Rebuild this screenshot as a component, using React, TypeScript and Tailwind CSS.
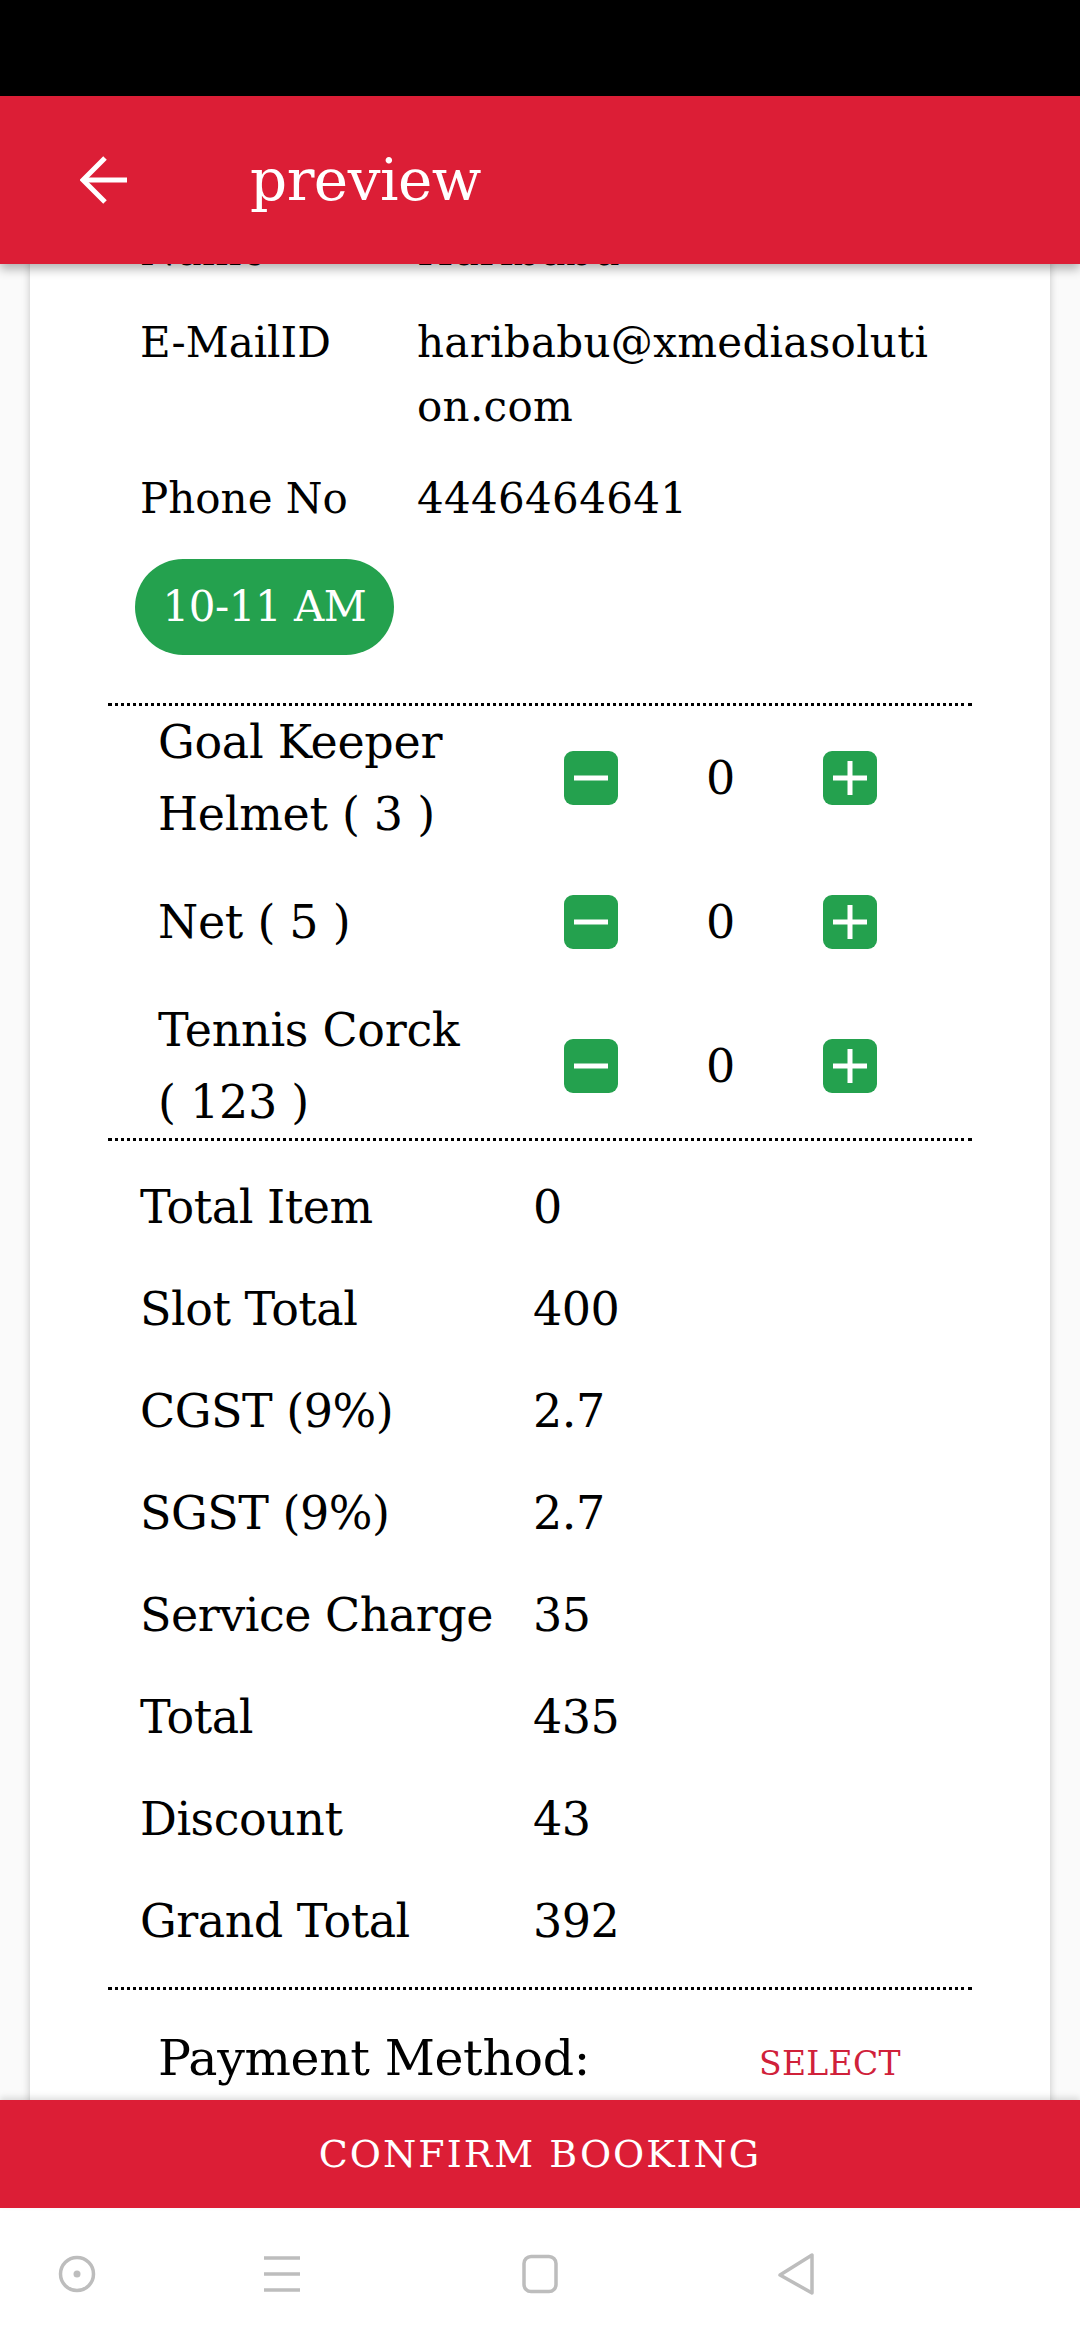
const details = [
  { label: "Name", value: ["Haribabu"] },
  { label: "E-MailID", value: ["haribabu@xmediasoluti", "on.com"] },
  { label: "Phone No", value: ["4446464641"] },
];

const items = [
  { name: "Goal Keeper Helmet (\u00a03\u00a0)", qty: 0 },
  { name: "Net (\u00a05\u00a0)", qty: 0 },
  { name: "Tennis Corck (\u00a0123\u00a0)", qty: 0 },
];

const summary = [
  ["Total Item", "0"],
  ["Slot Total", "400"],
  ["CGST (9%)", "2.7"],
  ["SGST (9%)", "2.7"],
  ["Service Charge", "35"],
  ["Total", "435"],
  ["Discount", "43"],
  ["Grand Total", "392"],
];

const Dotted = () => <div className="mx-[78px] border-t-[3px] border-dotted border-black" />;

const StepButton = ({ plus }: { plus?: boolean }) => (
  <div className="w-[54px] h-[54px] rounded-[9px] bg-[#24a14e] flex items-center justify-center shrink-0">
    <svg width="34" height="34" viewBox="0 0 34 34">
      <rect x="0" y="14.5" width="34" height="5" fill="white" />
      {plus && <rect x="14.5" y="0" width="5" height="34" fill="white" />}
    </svg>
  </div>
);

const App = () => {
  return (
    <div className="w-[1080px] h-[2340px] flex flex-col overflow-hidden bg-white font-['DejaVu_Serif',serif] text-black">
      {/* status bar */}
      <div className="h-[96px] bg-black shrink-0" />

      {/* app bar */}
      <div className="h-[168px] shrink-0 bg-[#dc1e36] relative z-10 shadow-[0_5px_10px_rgba(0,0,0,0.3)] flex items-center pl-[80px]">
        <svg width="48" height="50" viewBox="0 0 48 50" fill="none" stroke="white" strokeWidth="5">
          <path d="M3 25H47" />
          <path d="M25 3L3 25L25 47" strokeLinejoin="miter" />
        </svg>
        <span className="ml-[122px] text-[58px] text-white tracking-[-0.5px]">preview</span>
      </div>

      {/* scrolled content */}
      <div className="flex-1 overflow-hidden relative bg-[#fafafa]">
        <div className="mx-[30px] -mt-[45px] bg-white shadow-[0_0_8px_rgba(0,0,0,0.22)]">
          <div className="flex flex-col gap-[28px] text-[42px] leading-[64px]">
            {details.map((d) => (
              <div key={d.label} className="flex pl-[110px]">
                <div className="w-[277px] shrink-0">{d.label}</div>
                <div className="tracking-[0.3px]">
                  {d.value.map((v) => (
                    <div key={v}>{v}</div>
                  ))}
                </div>
              </div>
            ))}
            <div className="ml-[105px] w-[259px] h-[96px] rounded-full bg-[#24a14e] text-white flex items-center justify-center text-[42px] tracking-[-0.5px]">
              10-11 AM
            </div>
          </div>

          <div className="h-[48px]" />
          <Dotted />

          {/* extras */}
          <div className="text-[46px] leading-[72px] tracking-[-0.3px]">
            {items.map((it) => (
              <div key={it.name} className="h-[144px] flex items-center pl-[128px]">
                <div className="w-[406px] shrink-0">
                  <div className="max-w-[340px]">{it.name}</div>
                </div>
                <StepButton />
                <div className="w-[205px] text-center text-[46px]">{it.qty}</div>
                <StepButton plus />
              </div>
            ))}
          </div>

          <Dotted />

          {/* totals */}
          <div className="py-[15px] text-[46px] leading-[102px] tracking-[-0.5px]">
            {summary.map(([k, v]) => (
              <div key={k} className="flex pl-[110px]">
                <div className="w-[393px] shrink-0">{k}</div>
                <div>{v}</div>
              </div>
            ))}
          </div>

          <Dotted />

          <div className="flex items-baseline pl-[128px] pt-[33px] pb-[60px] leading-[72px]">
            <div className="w-[601px] text-[49px] tracking-[-0.4px]">Payment Method:</div>
            <div className="text-[33px] text-[#d0213a] tracking-[0.3px]">SELECT</div>
          </div>
        </div>
      </div>

      {/* confirm */}
      <div className="h-[108px] shrink-0 bg-[#dc1e36] relative z-10 shadow-[0_-3px_6px_rgba(0,0,0,0.12)] flex items-center justify-center text-white text-[38px] tracking-[2px]">
        CONFIRM BOOKING
      </div>

      {/* nav bar */}
      <div className="h-[132px] shrink-0 bg-white flex items-center">
        <svg className="ml-[57px]" width="40" height="40" viewBox="0 0 40 40" fill="none" stroke="#bdbdbd" strokeWidth="3.5">
          <circle cx="20" cy="20" r="16.5" />
          <circle cx="20" cy="20" r="3.5" fill="#bdbdbd" stroke="none" />
        </svg>
        <svg className="ml-[165px]" width="40" height="40" viewBox="0 0 40 40" fill="none" stroke="#bdbdbd" strokeWidth="3.5">
          <path d="M2 4H38M2 20H38M2 36H38" />
        </svg>
        <svg className="ml-[218px]" width="40" height="40" viewBox="0 0 40 40" fill="none" stroke="#bdbdbd" strokeWidth="3.5">
          <rect x="4" y="2.5" width="32" height="35" rx="7" />
        </svg>
        <svg className="ml-[217px]" width="40" height="44" viewBox="0 0 40 44" fill="none" stroke="#bdbdbd" strokeWidth="3.5" strokeLinejoin="round" strokeLinecap="round">
          <path d="M35 3V41L3 23Z" />
        </svg>
      </div>
    </div>
  );
};

export default App;
